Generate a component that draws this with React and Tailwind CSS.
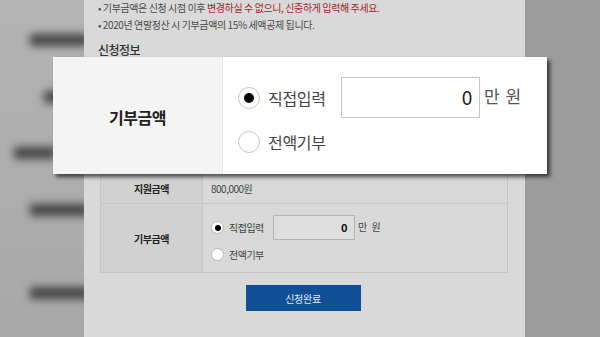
import React from "react";

const Radio = ({ checked, big }) => (
  <span
    className={`flex items-center justify-center rounded-full border bg-white shrink-0 ${
      big ? "w-[22px] h-[22px] border-[#c8c8c8]" : "w-[13px] h-[13px] border-[#b8b8b8]"
    }`}
  >
    {checked && (
      <span className={`rounded-full bg-black ${big ? "w-[10px] h-[10px]" : "w-[6px] h-[6px]"}`} />
    )}
  </span>
);

const App = () => {
  return (
    <div className="relative w-[600px] h-[337px] overflow-hidden flex bg-[#9c9c9c] font-['Noto_Sans_CJK_KR','Noto_Sans',sans-serif]">
      {/* blurred side menu */}
      <aside className="w-[84px] shrink-0 flex flex-col bg-gradient-to-b from-[#b4b4b4] to-[#a8a8a8] overflow-hidden">
        <div className="mt-[34px] ml-[30px] w-[60px] h-[12px] bg-[#444] blur-[4px]" />
        <div className="mt-[45px] ml-[44px] w-[50px] h-[12px] bg-[#444] blur-[4px]" />
        <div className="mt-[44px] ml-[14px] w-[42px] h-[12px] bg-[#444] blur-[4px]" />
        <div className="mt-[45px] ml-[30px] w-[60px] h-[12px] bg-[#444] blur-[4px]" />
        <div className="mt-[71px] ml-[30px] w-[60px] h-[12px] bg-[#444] blur-[4px]" />
      </aside>

      {/* page content */}
      <main className="w-[441px] shrink-0 bg-[#d9d9d9] pl-[14px] pr-[17px] flex flex-col">
        <ul className="text-[10px] leading-[17px] tracking-[-0.4px] text-[#4a4a4a] -mt-[1px]">
          <li>
            • 기부금액은 신청 시점 이후{" "}
            <span className="text-[#a3282a]">변경하실 수 없으니, 신중하게 입력해 주세요.</span>
          </li>
          <li>• 2020년 연말정산 시 기부금액의 15% 세액공제 됩니다.</li>
        </ul>
        <h3 className="mt-[10px] text-[12px] leading-[14px] font-medium text-[#333] tracking-[-0.5px]">신청정보</h3>

        <div className="mt-[5px] ml-[2px] border-t-2 border-[#555] text-[10px] tracking-[-0.5px]">
          <div className="grid grid-cols-[102px_1fr] h-[36px] border-b border-[#c6c6c6]">
            <div className="bg-[#d1d1d1] border-l border-[#c6c6c6]" />
            <div className="border-x border-[#c6c6c6]" />
          </div>
          <div className="grid grid-cols-[102px_1fr] h-[36px] border-b border-[#c6c6c6]">
            <div className="bg-[#d1d1d1] border-l border-[#c6c6c6]" />
            <div className="border-x border-[#c6c6c6]" />
          </div>
          <div className="grid grid-cols-[102px_1fr] h-[37px] border-b border-[#c6c6c6]">
            <div className="bg-[#d1d1d1] border-l border-[#c6c6c6]" />
            <div className="border-x border-[#c6c6c6]" />
          </div>
          {/* 지원금액 */}
          <div className="grid grid-cols-[102px_1fr] h-[31px] border-b border-[#c6c6c6]">
            <div className="bg-[#d1d1d1] border-l border-[#c6c6c6] flex items-center justify-center font-bold text-[#222]">
              지원금액
            </div>
            <div className="border-x border-[#c6c6c6] flex items-center pl-[8px] text-[#444]">800,000원</div>
          </div>
          {/* 기부금액 */}
          <div className="grid grid-cols-[102px_1fr] h-[69px] border-b border-[#c6c6c6]">
            <div className="bg-[#d1d1d1] border-l border-[#c6c6c6] flex items-center justify-center font-bold text-[#222]">
              기부금액
            </div>
            <div className="border-x border-[#c6c6c6] flex flex-col pl-[8px] pt-[11px] gap-[12px] text-[#444]">
              <div className="flex items-center h-[25px]">
                <Radio checked />
                <span className="ml-[5px] w-[44px]">직접입력</span>
                <span className="w-[82px] h-[25px] border border-[#b4b4b4] bg-[#dedede] flex items-center justify-end pr-[7px] font-bold text-[#111] text-[11px]">
                  0
                </span>
                <span className="ml-[3px] -mt-[2px] tracking-[1px]">만 원</span>
              </div>
              <div className="flex items-center -mt-[5px]">
                <Radio />
                <span className="ml-[5px]">전액기부</span>
              </div>
            </div>
          </div>
        </div>

        <div className="mt-[12px] flex justify-center">
          <button className="w-[115px] h-[26px] bg-[#0e4f96] text-[#e4ebf4] text-[10px] tracking-[-0.3px]">
            신청완료
          </button>
        </div>
      </main>

      <div className="flex-1 bg-[#9c9c9c]" />

      {/* zoomed callout */}
      <div className="absolute left-[53px] top-[57px] w-[494px] h-[117px] bg-white flex shadow-[3px_3px_4px_rgba(0,0,0,0.65)]">
        <div className="w-[170px] bg-[#f4f4f4] border-r border-[#e4e4e4] flex items-center justify-center pt-[3px] text-[16px] font-bold text-[#222] tracking-[-0.5px]">
          기부금액
        </div>
        <div className="flex-1 flex flex-col pl-[15px] pt-[20px] text-[16px] text-[#444] tracking-[-0.3px]">
          <div className="flex items-center h-[41px]">
            <Radio checked big />
            <span className="ml-[8px] w-[73px]">직접입력</span>
            <span className="w-[139px] h-[41px] border border-[#c4c4c4] flex items-center justify-end pr-[7px] text-[19px] text-[#222]">
              0
            </span>
            <span className="ml-[4px] self-start mt-[6px] text-[17px] text-[#555] tracking-[1px]">만 원</span>
          </div>
          <div className="flex items-center mt-[12px]">
            <Radio big />
            <span className="ml-[8px]">전액기부</span>
          </div>
        </div>
      </div>
    </div>
  );
};

export default App;
